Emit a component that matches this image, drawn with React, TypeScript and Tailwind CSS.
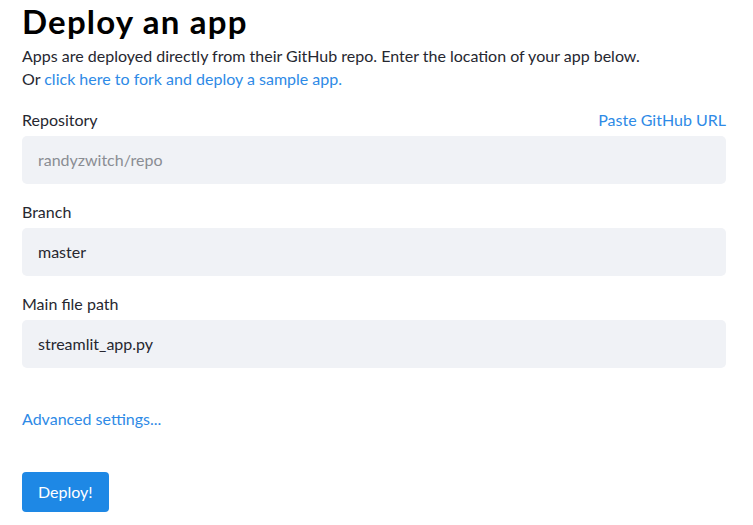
import React from "react";

const Field = ({ label, value, muted, right }: { label: string; value: string; muted?: boolean; right?: string }) => (
  <div className="mb-[16px]">
    <div className="flex items-center justify-between h-[24px] mb-[4px]">
      <span className="text-[16px] text-[#262730]">{label}</span>
      {right && <a className="text-[16px] text-[#2e8ae6]">{right}</a>}
    </div>
    <div className="h-[48px] rounded-[5px] bg-[#f0f2f6] flex items-center px-[16px]">
      <span className={`text-[16px] ${muted ? "text-[#8a8d93]" : "text-[#262730]"}`}>{value}</span>
    </div>
  </div>
);

export default function App() {
  return (
    <div className="bg-white min-h-screen pl-[22px] pr-[27px] pt-[2px] font-['Lato','Noto_Sans',sans-serif]">
      <h1 className="text-[33px] font-bold text-black leading-[38px] tracking-[1.2px]">Deploy an app</h1>
      <p className="text-[16px] text-[#262730] leading-[23px] mt-[4px]">
        Apps are deployed directly from their GitHub repo. Enter the location of your app below.
      </p>
      <p className="text-[16px] text-[#262730] leading-[23px]">
        Or <a className="text-[#2e8ae6]">click here to fork and deploy a sample app.</a>
      </p>
      <div className="mt-[18px]">
        <Field label="Repository" value="randyzwitch/repo" muted right="Paste GitHub URL" />
        <Field label="Branch" value="master" />
        <Field label="Main file path" value="streamlit_app.py" />
      </div>
      <div className="mt-[39px] text-[16px] text-[#2e8ae6] leading-[24px]">Advanced settings...</div>
      <button className="mt-[41px] h-[40px] px-[16px] rounded-[4px] bg-[#1e88e5] text-white text-[16px]">
        Deploy!
      </button>
    </div>
  );
}
